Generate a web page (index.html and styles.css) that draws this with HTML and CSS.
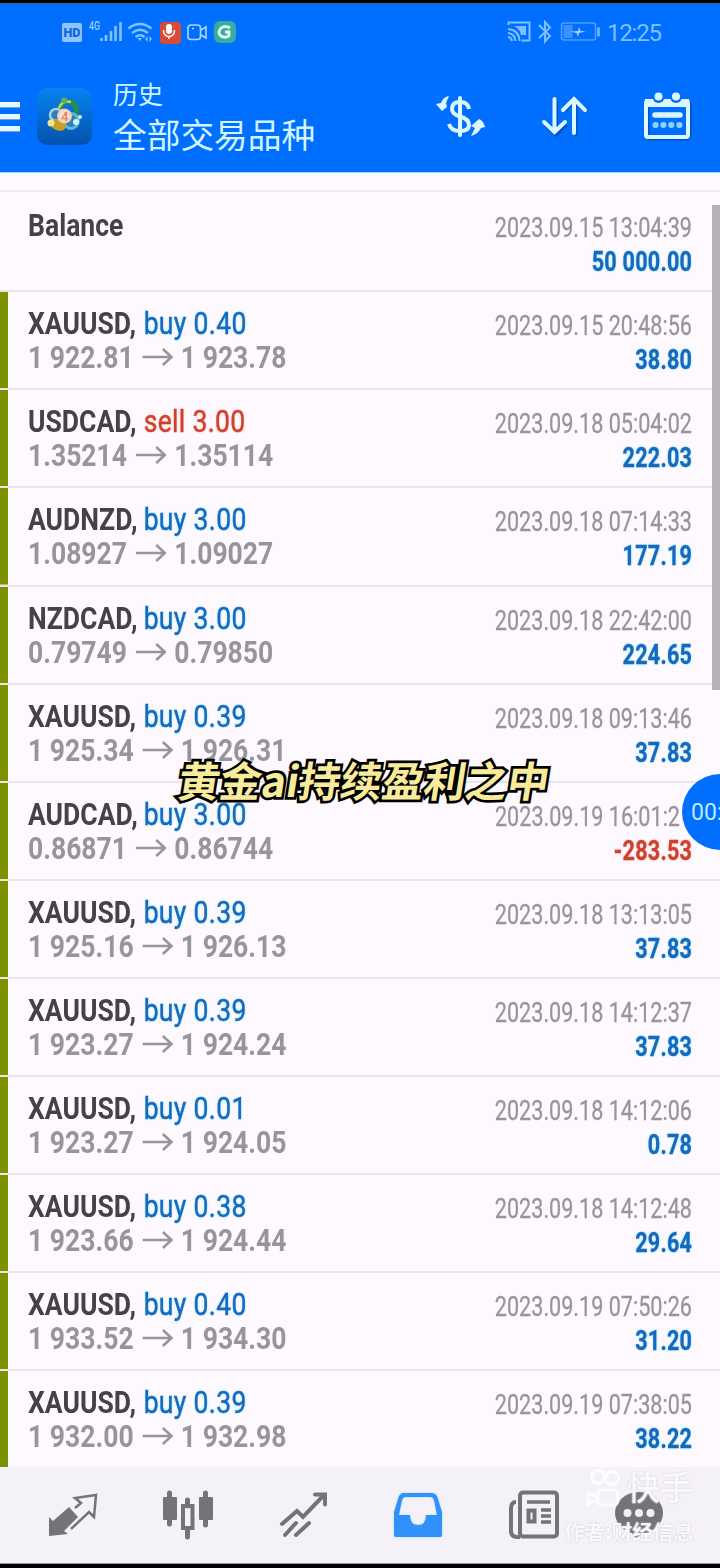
FILE: index.html
```html
<!DOCTYPE html>
<html lang="zh-CN">
<head>
<meta charset="utf-8">
<title>历史</title>
<link rel="stylesheet" href="styles.css">
</head>
<body>
<div class="screen">
  <header class="top">
    <div class="status">
      <svg class="status-left" width="180" height="30" viewBox="60 17 180 30">
        <rect x="62" y="23" width="20" height="19" rx="2" fill="#8fc4ff"/>
        <text x="63.5" y="37" class="hd" textLength="17" lengthAdjust="spacingAndGlyphs">HD</text>
        <text x="89" y="30" class="g4" textLength="11" lengthAdjust="spacingAndGlyphs">4G</text>
        <path d="M101.500 38v3M106 35v6M111 31v10M115.500 26v15M120.500 22v19" stroke="#7fc4ff" stroke-width="2.600"/>
        <g fill="none" stroke="#7fc4ff" stroke-width="2.500"><path d="M128.500 28.500q11-9 23 0M132 33q8-6.500 16 0M135.500 37q4.500-3.500 9 0"/></g>
        <path d="M137.500 38h4.500l-2.200 3zM145 39l2.500-3v6zM152 39l-2.500-3v6z" fill="#7fc4ff"/>
        <rect x="160" y="22" width="21" height="22" rx="4" fill="#db4a35"/>
        <rect x="166" y="24" width="6" height="10" rx="3" fill="#fff"/>
        <path d="M163.500 30q0 6.500 5.500 6.500t5.500-6.500M169 36v3" fill="none" stroke="#fff" stroke-width="1.500"/>
        <rect x="188" y="25" width="12.500" height="14.500" rx="3" fill="none" stroke="#a9d8ff" stroke-width="1.600"/>
        <path d="M201 30l5-3v11l-5-3M192 28.500h2" fill="none" stroke="#a9d8ff" stroke-width="1.600"/>
        <rect x="214" y="21" width="22" height="22" rx="6" fill="#36ae9c"/>
        <path d="M230 28q-5-3-9 0-4 5 0 8 4 2.500 8 0v-4h-4" fill="none" stroke="#e6fff5" stroke-width="2.800"/>
      </svg>
      <svg class="status-right" width="170" height="30" viewBox="500 17 170 30">
        <g fill="none" stroke="#7fbeff" stroke-width="2">
          <path d="M508.500 25v-2.500h21v18h-8"/><path d="M508 29q11 1 11.500 12M508 33q7 1 7.500 8M508 37q3.500.5 4 4"/>
          <path d="M539 25l11 11-5 5.500V22l5 5.500-11 10.500"/>
          <rect x="561.500" y="23" width="34" height="17" rx="2.500" stroke="#4f9fff" stroke-width="1.500"/>
        </g>
        <path d="M514 26h12v9h-5q-1-6-7-9z" fill="#7fbeff"/>
        <rect x="563.500" y="25" width="9" height="13" fill="#3b91ff"/>
        <path d="M570 31.500l8-.5 1-4 1.500 4 5.500.5-7 1.500-1 4-1.500-4z" fill="#9bd4ff"/>
        <path d="M598.500 27.500v9" stroke="#7fbeff" stroke-width="2.500"/>
        <text x="607" y="41" class="clock" textLength="55">12:25</text>
      </svg>
    </div>
    <div class="appbar">
      <div class="burger"><i></i><i></i><i></i></div>
      <svg class="logo" width="60" height="60" viewBox="35 85 60 60">
        <defs>
          <linearGradient id="tile" x1="0" y1="0" x2="0" y2="1"><stop offset="0" stop-color="#0683ef"/><stop offset="1" stop-color="#0452ae"/></linearGradient>
          <radialGradient id="coin"><stop offset="0" stop-color="#fff"/><stop offset="1" stop-color="#f1c6ac"/></radialGradient>
        </defs>
        <rect x="37" y="88" width="55" height="57" rx="10" fill="url(#tile)"/>
        <circle cx="68" cy="110" r="8.500" fill="none" stroke="#2c8a4c" stroke-width="5"/>
        <path d="M59 108q3-8 12-6" stroke="#b5d774" stroke-width="2.500" fill="none"/>
        <circle cx="56" cy="115" r="6" fill="#2f7fc0" stroke="#9fd3dc" stroke-width="2.500"/>
        <circle cx="71" cy="121" r="7.500" fill="#2f7fc0" stroke="#62b7d2" stroke-width="3"/>
        <path d="M49 121q1 9 12 10 5-1 5-7l-6-5-8 1z" fill="#c9a027"/>
        <circle cx="51" cy="123" r="3.500" fill="#f6e193"/><circle cx="64" cy="100.500" r="3" fill="#64ae6c"/>
        <circle cx="76" cy="122" r="3" fill="#cdf5ff"/><circle cx="80" cy="117" r="2" fill="#d8eef6"/>
        <circle cx="64.500" cy="116" r="7.500" fill="url(#coin)"/>
        <text x="61" y="121" class="coin">4</text>
      </svg>
      <div class="titles"><div class="title">历史</div><div class="subtitle">全部交易品种</div></div>
      <svg class="actions" width="270" height="60" viewBox="430 85 270 60">
        <g fill="none" stroke="#00398e" stroke-opacity=".5" stroke-width="4" transform="translate(1.500 1.500)">
          <path d="M554.500 98v34M544 123l10.500 10 10.500-10M574 134V99M563 109l11-10 11 10"/><rect x="646" y="100" width="42" height="37" rx="3"/>
        </g>
        <g fill="none" stroke="#dcf8ff" stroke-width="4">
          <path d="M460 98v37" stroke-linecap="round"/>
          <path d="M469 109q-1-7-9-7-8 0-8 7 0 5 8 7.500 9 2.500 9 8.500 0 6-9 6t-11-7"/>
          <path d="M554.500 99v33M544 122l10.500 10 10.500-10M574 133V100M563 110l11-11 11 11" stroke-linecap="round"/>
          <rect x="646" y="101" width="42" height="36" rx="2"/>
        </g>
        <path d="M436 104l5-1q2-6 8-7l-3 7 1 4-5 4zM485 127l-4 1q-3 6-10 8l4-8-4-2 8-7q4 1 6 8z" fill="#dcf8ff"/>
        <path d="M645 99h44v8h-44z" fill="#dcf8ff"/>
        <circle cx="658.500" cy="97" r="6" fill="#006fff"/><circle cx="676" cy="97" r="6" fill="#006fff"/>
        <circle cx="658.500" cy="96.500" r="4" fill="#dcf8ff"/><circle cx="676" cy="96.500" r="4" fill="#dcf8ff"/>
        <path d="M655 115h25" stroke="#dcf8ff" stroke-width="5.500" stroke-linecap="round"/>
        <path d="M655.500 125h.1M663.300 125h.1M671.200 125h.1M679.300 125h.1" stroke="#8fd3ff" stroke-width="6" stroke-linecap="round"/>
      </svg>
    </div>
  </header>

  <main class="list">
    <div class="row balance"><div class="left"><p><b>Balance</b></p></div><div class="right"><p>2023.09.15 13:04:39</p><p class="sum">50 000.00</p></div></div>
    <div class="row"><div class="left"><p><b>XAUUSD,</b><span class="buy">buy 0.40</span></p><p class="price">1 922.81<svg class="arrow" viewBox="0 0 30 20" preserveAspectRatio="none"><path d="M0 10h28M20 2l8.500 8-8.500 8"/></svg>1 923.78</p></div><div class="right"><p>2023.09.15 20:48:56</p><p class="sum">38.80</p></div></div>
    <div class="row"><div class="left"><p><b>USDCAD,</b><span class="sell">sell 3.00</span></p><p class="price">1.35214<svg class="arrow" viewBox="0 0 30 20" preserveAspectRatio="none"><path d="M0 10h28M20 2l8.500 8-8.500 8"/></svg>1.35114</p></div><div class="right"><p>2023.09.18 05:04:02</p><p class="sum">222.03</p></div></div>
    <div class="row"><div class="left"><p><b>AUDNZD,</b><span class="buy">buy 3.00</span></p><p class="price">1.08927<svg class="arrow" viewBox="0 0 30 20" preserveAspectRatio="none"><path d="M0 10h28M20 2l8.500 8-8.500 8"/></svg>1.09027</p></div><div class="right"><p>2023.09.18 07:14:33</p><p class="sum">177.19</p></div></div>
    <div class="row"><div class="left"><p><b>NZDCAD,</b><span class="buy">buy 3.00</span></p><p class="price">0.79749<svg class="arrow" viewBox="0 0 30 20" preserveAspectRatio="none"><path d="M0 10h28M20 2l8.500 8-8.500 8"/></svg>0.79850</p></div><div class="right"><p>2023.09.18 22:42:00</p><p class="sum">224.65</p></div></div>
    <div class="row"><div class="left"><p><b>XAUUSD,</b><span class="buy">buy 0.39</span></p><p class="price">1 925.34<svg class="arrow" viewBox="0 0 30 20" preserveAspectRatio="none"><path d="M0 10h28M20 2l8.500 8-8.500 8"/></svg>1 926.31</p></div><div class="right"><p>2023.09.18 09:13:46</p><p class="sum">37.83</p></div></div>
    <div class="row"><div class="left"><p><b>AUDCAD,</b><span class="buy">buy 3.00</span></p><p class="price">0.86871<svg class="arrow" viewBox="0 0 30 20" preserveAspectRatio="none"><path d="M0 10h28M20 2l8.500 8-8.500 8"/></svg>0.86744</p></div><div class="right"><p class="clipped">2023.09.19 16:01:2</p><p class="sum loss">-283.53</p></div></div>
    <div class="row"><div class="left"><p><b>XAUUSD,</b><span class="buy">buy 0.39</span></p><p class="price">1 925.16<svg class="arrow" viewBox="0 0 30 20" preserveAspectRatio="none"><path d="M0 10h28M20 2l8.500 8-8.500 8"/></svg>1 926.13</p></div><div class="right"><p>2023.09.18 13:13:05</p><p class="sum">37.83</p></div></div>
    <div class="row"><div class="left"><p><b>XAUUSD,</b><span class="buy">buy 0.39</span></p><p class="price">1 923.27<svg class="arrow" viewBox="0 0 30 20" preserveAspectRatio="none"><path d="M0 10h28M20 2l8.500 8-8.500 8"/></svg>1 924.24</p></div><div class="right"><p>2023.09.18 14:12:37</p><p class="sum">37.83</p></div></div>
    <div class="row"><div class="left"><p><b>XAUUSD,</b><span class="buy">buy 0.01</span></p><p class="price">1 923.27<svg class="arrow" viewBox="0 0 30 20" preserveAspectRatio="none"><path d="M0 10h28M20 2l8.500 8-8.500 8"/></svg>1 924.05</p></div><div class="right"><p>2023.09.18 14:12:06</p><p class="sum">0.78</p></div></div>
    <div class="row"><div class="left"><p><b>XAUUSD,</b><span class="buy">buy 0.38</span></p><p class="price">1 923.66<svg class="arrow" viewBox="0 0 30 20" preserveAspectRatio="none"><path d="M0 10h28M20 2l8.500 8-8.500 8"/></svg>1 924.44</p></div><div class="right"><p>2023.09.18 14:12:48</p><p class="sum">29.64</p></div></div>
    <div class="row"><div class="left"><p><b>XAUUSD,</b><span class="buy">buy 0.40</span></p><p class="price">1 933.52<svg class="arrow" viewBox="0 0 30 20" preserveAspectRatio="none"><path d="M0 10h28M20 2l8.500 8-8.500 8"/></svg>1 934.30</p></div><div class="right"><p>2023.09.19 07:50:26</p><p class="sum">31.20</p></div></div>
    <div class="row last"><div class="left"><p><b>XAUUSD,</b><span class="buy">buy 0.39</span></p><p class="price">1 932.00<svg class="arrow" viewBox="0 0 30 20" preserveAspectRatio="none"><path d="M0 10h28M20 2l8.500 8-8.500 8"/></svg>1 932.98</p></div><div class="right"><p>2023.09.19 07:38:05</p><p class="sum">38.22</p></div></div>
  </main>

  <nav class="tabs">
    <svg width="60" height="60" viewBox="43 1485 60 60"><path d="M49 1517l4 4 16-14 9 10-14 14 4 3-19 2z" fill="#757278"/><path d="M75 1508l6-5-6-5 21-3-2 22-5-5-18 17" fill="none" stroke="#757278" stroke-width="2.500"/></svg>
    <svg width="60" height="60" viewBox="158 1485 60 60"><g stroke="#757278" stroke-linecap="round"><path d="M169.500 1493v31M205.500 1493v32M187.500 1500v6M187.500 1530v7" stroke-width="5"/></g><rect x="163" y="1497" width="14" height="23" rx="1" fill="#757278"/><rect x="199" y="1497" width="14" height="23" rx="1" fill="#757278"/><rect x="183" y="1506" width="9.500" height="22" fill="none" stroke="#757278" stroke-width="4"/></svg>
    <svg width="60" height="60" viewBox="272 1485 60 60"><path d="M281 1524l15-13 6 6 21-22M284 1535l11-12M295 1535l13-12M314 1494.500h10v10" fill="none" stroke="#757278" stroke-width="4" stroke-linecap="round"/></svg>
    <svg class="active" width="60" height="60" viewBox="388 1485 60 60"><path fill-rule="evenodd" d="M403 1493h29q3 0 5 3l5 16v23q0 2-2 2h-44q-2 0-2-2v-23l5-16q2-3 4-3zM405 1497q-2 0-3 3l-3 15h11q0 10 8 10t8-10h11l-3-15q-1-3-3-3z" fill="#3290fa"/></svg>
    <svg width="60" height="60" viewBox="503 1485 60 60"><g fill="none" stroke="#757278" stroke-width="4"><path d="M520 1537q-9 1-9-6v-22q0-7 5-7"/><rect x="520" y="1492.500" width="37" height="44" rx="3"/><path d="M527 1502h23M541 1510h10M541 1516h10M541 1522h10" stroke-width="3.500"/><rect x="528.500" y="1510.500" width="6" height="11"/></g></svg>
    <svg width="60" height="60" viewBox="609 1485 60 60"><ellipse cx="639" cy="1513" rx="24" ry="21" fill="#757278"/><path d="M630 1530h15l-9 9z" fill="#757278"/><circle cx="627.500" cy="1513" r="4" fill="#f4f0f7"/><circle cx="639" cy="1513" r="4" fill="#f4f0f7"/><circle cx="650.500" cy="1513" r="4" fill="#f4f0f7"/></svg>
  </nav>

  <div class="scroll"></div>
  <div class="caption">黄金ai持续盈利之中</div>
  <div class="bubble">00:</div>
  <div class="mark">
    <div class="brand"><svg width="36" height="42" viewBox="586 1467 36 42"><g fill="none" stroke="#fff" stroke-opacity=".8" stroke-width="3"><circle cx="598" cy="1477" r="6.500"/><circle cx="612" cy="1478" r="6.500"/><rect x="598" y="1490" width="20" height="15" rx="4"/><path d="M598 1497l-10-4v11l10-4"/></g></svg><span>快手</span></div>
    <div class="author">作者:财经信息</div>
  </div>
</div>
</body>
</html>
```
FILE: styles.css
```css
* { box-sizing: border-box; }
body { margin: 0; background: #000; font-family: Roboto, "Noto Sans CJK SC", sans-serif; }
p { margin: 0; }
svg { display: block; flex: none; }
.screen { position: relative; width: 720px; height: 1568px; overflow: hidden; display: flex; flex-direction: column; padding: 3px 0 4px; background: #000; }
.top { height: 170px; flex: none; background: #006fff; border-top: 1px solid #2c62a6; border-bottom: 1px solid #8fe2ff; }
.status { height: 57px; display: flex; justify-content: space-between; padding: 13px 50px 0 60px; }
.hd { font: 900 13px Roboto, sans-serif; fill: #1068d8; }
.g4 { font: 500 12px Roboto, sans-serif; fill: #8fd0ff; }
.clock { font: 400 24px Roboto, sans-serif; fill: #7fbeff; }
.coin { font: 700 13px Roboto, sans-serif; fill: #e8875f; }
.appbar { height: 110px; display: flex; align-items: flex-start; }
.burger { width: 20px; margin: 41px 15px 0 0; display: flex; flex-direction: column; gap: 6px; }
.burger i { height: 6px; background: #dff9ff; border-bottom: 1px solid #7d9cc8; }
.logo { margin-top: 24px; }
.titles { width: 317px; margin: 14px 0 0 18px; color: #d3f5ff; font-family: "Noto Sans CJK SC", sans-serif; font-weight: 400; }
.title { font-size: 25px; line-height: 36px; }
.subtitle { font-size: 33.700px; line-height: 45px; }
.actions { margin-top: 24px; }
.list { flex: none; height: 1294px; padding-top: 17px; background: #fef9ff; overflow: hidden; }
.row { height: 98.080px; display: flex; justify-content: space-between; padding: 14px 28px 0; background: linear-gradient(#7b9200, #7b9200) left / 8px 100% no-repeat; border-bottom: 2px solid #e9e4eb; color: #454247; }
.row.balance { height: 102.300px; padding-top: 16px; background: none; border-top: 2px solid #efeaf1; }
.row.last { border-bottom: 0; background: linear-gradient(#7b9200, #7b9200) left / 8px 100% no-repeat; }
.left { width: 320px; font-size: 32px; line-height: 34px; transform: scaleX(.829); transform-origin: left; white-space: nowrap; }
.left b { display: inline-block; min-width: 139.500px; }
.price { display: flex; align-items: center; font-weight: 700; color: #98949b; }
.arrow { width: 37px; height: 20px; margin: 0 9px 0 11px; fill: none; stroke: #98949b; stroke-width: 2.500; }
.right { width: 300px; padding-top: 3px; text-align: right; font-size: 27px; line-height: 34px; color: #98949b; transform: scaleX(.8); transform-origin: right; white-space: nowrap; -webkit-text-stroke: .3px; }
.buy, .sum { color: #1769bd; text-shadow: 0 0 3px #8deaff; }
.buy, .sell { letter-spacing: .4px; -webkit-text-stroke: .4px; }
.sum { font-weight: 700; letter-spacing: .3px; margin-right: -.3px; }
.sell, .loss { color: #ce412e; text-shadow: 0 0 3px #ffc9bd; }
.clipped { padding-right: 15px; }
.tabs { height: 97px; flex: none; display: flex; align-items: flex-start; gap: 55px; padding: 18px 0 0 43px; background: #f5f1f8; border-bottom: 1px solid #96939a; }
.tabs svg:last-child { margin-left: -9px; }
.active { filter: drop-shadow(0 0 1px #8fe6ff); }
.scroll { position: absolute; right: 0; top: 205px; width: 8px; height: 485px; background: #b6b0b8; }
.caption { position: absolute; left: 179px; top: 749px; font: 700 41.700px/60px "Noto Sans CJK SC", sans-serif; color: #f8eb9c; -webkit-text-stroke: 5.500px #000; paint-order: stroke fill; transform: skewX(-9deg); white-space: nowrap; }
.bubble { position: absolute; left: 682px; top: 774px; width: 76px; height: 76px; border-radius: 50%; background: #006fff; color: #b9ecff; font-size: 23px; line-height: 78px; padding-left: 9px; }
.mark { position: absolute; left: 564px; top: 1467px; color: rgba(255, 255, 255, .9); font-family: "Noto Sans CJK SC", sans-serif; white-space: nowrap; text-shadow: 0 0 2px #ccc7ce; }
.brand { display: flex; align-items: center; height: 42px; padding-left: 22px; gap: 5px; }
.brand span { font-size: 33px; font-weight: 500; line-height: 38px; height: 42px; }
.author { font-size: 20.500px; line-height: 26px; margin-top: 9px; font-weight: 700; }
```
